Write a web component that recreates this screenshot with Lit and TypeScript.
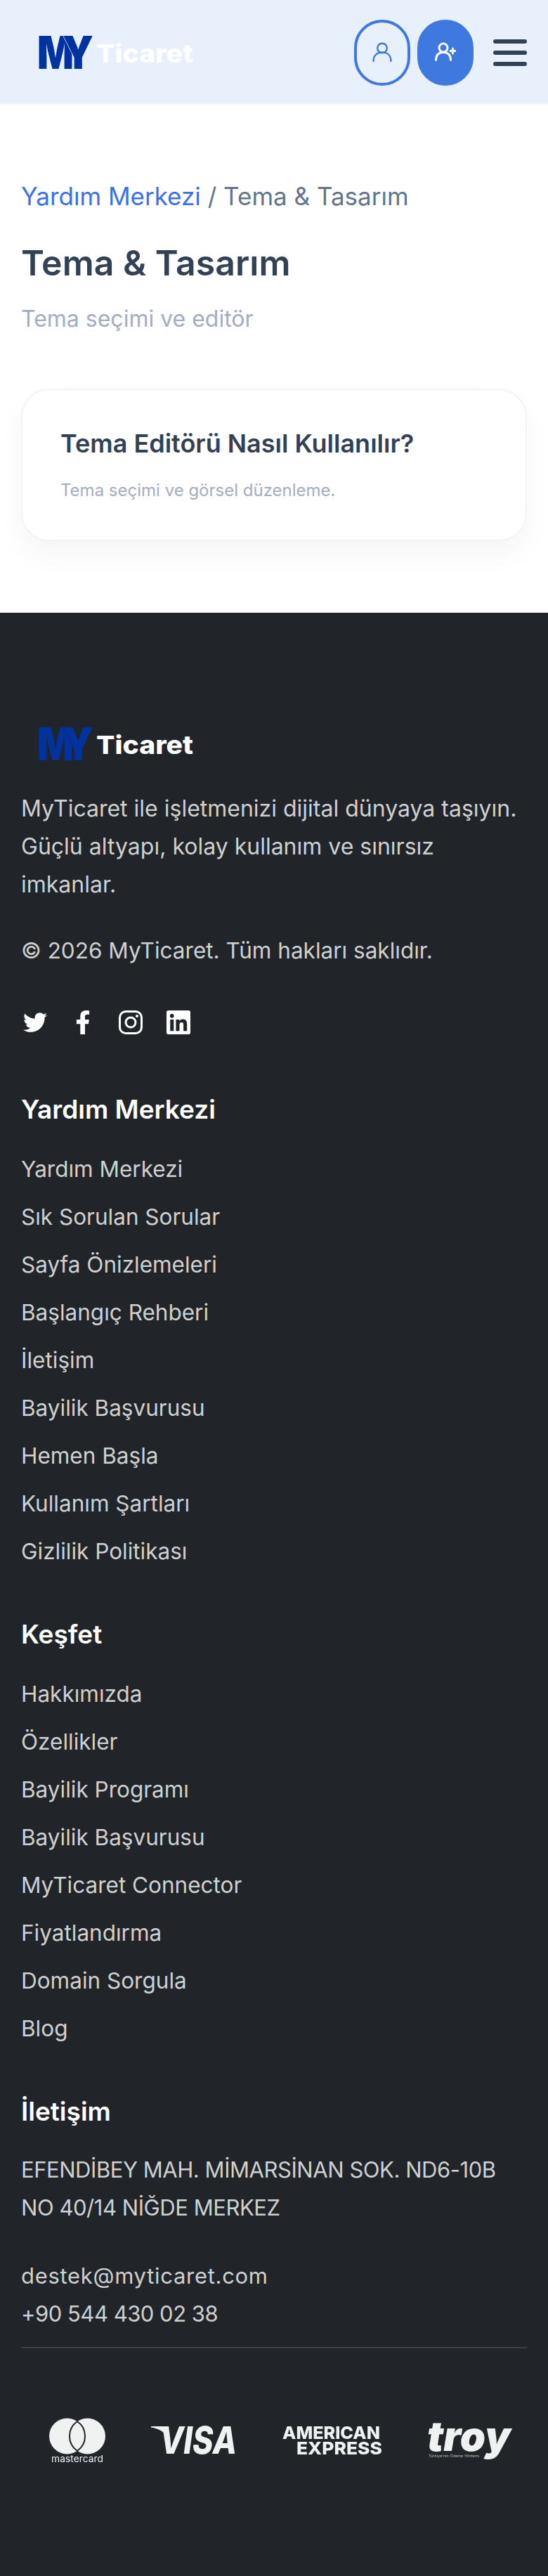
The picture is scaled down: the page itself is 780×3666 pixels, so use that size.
import { LitElement, html, css } from "lit";
import { customElement } from "lit/decorators.js";

const helpLinks = ["Yardım Merkezi","Sık Sorulan Sorular","Sayfa Önizlemeleri","Başlangıç Rehberi","İletişim","Bayilik Başvurusu","Hemen Başla","Kullanım Şartları","Gizlilik Politikası"];
const discoverLinks = ["Hakkımızda","Özellikler","Bayilik Programı","Bayilik Başvurusu","MyTicaret Connector","Fiyatlandırma","Domain Sorgula","Blog"];

const logo = (cls: string) => html`
  <svg class="logo ${cls}" width="224" height="50" viewBox="0 0 224 50">
    <text class="my" x="0" y="48" textLength="52" lengthAdjust="spacingAndGlyphs">M</text>
    <text class="my y" x="36" y="48" textLength="44" lengthAdjust="spacingAndGlyphs">Y</text>
    <text class="tic" x="84" y="39" textLength="138" lengthAdjust="spacingAndGlyphs">Ticaret</text>
  </svg>`;

@customElement("app-root")
export class AppRoot extends LitElement {
  static styles = css`
    :host { display: block; width: 780px; font-family: Inter, "Liberation Sans", sans-serif; background: #fff; }
    * { box-sizing: border-box; }
    .head { height: 148px; background: #e8f0fb; display: flex; align-items: center; padding: 2px 30px 0 53px; }
    .logo { display: block; overflow: visible; }
    .logo .my { font: 900 65px Inter, sans-serif; fill: #0033a0; }
    .logo .y { stroke-width: 1.5px; paint-order: stroke; }
    .logo.top .y { stroke: #e8f0fb; }
    .logo.bottom .y { stroke: #212529; }
    .logo .tic { font: 800 36px Inter, sans-serif; fill: #fff; }
    .actions { margin-left: auto; display: flex; align-items: center; }
    .btn { width: 80px; height: 94px; border-radius: 40px; border: 4px solid #3f79e0; display: flex; align-items: center; justify-content: center; }
    .btn.fill { background: #3f79e0; margin-left: 10px; }
    .burger { margin-left: 28px; display: flex; flex-direction: column; gap: 10px; }
    .burger i { display: block; width: 48px; height: 6px; border-radius: 3px; background: #334155; }
    main { padding: 107px 30px 102px; }
    .crumb { font-size: 35px; line-height: 48px; color: #64748b; }
    .crumb a { color: #3b71e6; }
    h1 { margin: 41px 0 0; font-size: 50px; line-height: 60px; font-weight: 600; color: #334155; }
    .sub { margin: 28px 0 0; font-size: 32px; line-height: 44px; color: #a3adbf; }
    .card { margin-top: 77px; height: 217px; border: 2px solid #f3f4f6; border-radius: 40px; padding: 51px 54px; box-shadow: 0 20px 40px rgba(0,0,0,.04); background: #fff; }
    .card h2 { margin: 0; font-size: 36px; line-height: 50px; font-weight: 600; color: #334155; }
    .card p { margin: 24px 0 0; font-size: 24px; line-height: 36px; color: #a3adbf; }
    footer { background: #212529; height: 2794px; padding: 162px 30px 0; color: #cfd0d1; font-size: 31.500px; line-height: 54px; }
    footer .logo { margin-left: 23px; }
    footer p { margin: 0; }
    .about { margin-top: 40px; font-size: 32px; }
    .copy { margin-top: 40px; }
    .social { margin-top: 58px; padding-left: 3px; display: flex; gap: 34px; }
    .social svg { display: block; width: 34px; height: 34px; fill: #fff; }
    h3 { margin: 0; color: #fff; font-size: 37px; line-height: 54px; font-weight: 600; }
    .sec1 { margin-top: 80px; }
    ul { list-style: none; margin: 31px 0 0; padding: 0; display: flex; flex-direction: column; gap: 14px; }
    .sec2, .sec3 { margin-top: 64px; }
    .addr { margin-top: 29px; font-size: 31px; letter-spacing: -.45px; }
    .contact { margin-top: 43px; font-size: 31px; }
    .mail { display: block; letter-spacing: .7px; }
    .tel { display: block; letter-spacing: -.5px; }
    hr { margin: 20px 0 0; border: 0; height: 2px; background: #3a4043; }
    .pay { margin-top: 100px; padding-left: 40px; display: flex; align-items: flex-start; filter: blur(.6px); }
    .pay svg { display: block; flex: none; overflow: visible; }
    .pay text { fill: #f0f1f1; font-family: Inter, sans-serif; }
    .pay .visa { margin: 10px 0 0 65px; }
    .pay .amex { margin: 11px 0 0 65px; }
    .pay .troy { margin: 5px 0 0 64px; }
  `;

  render() {
    return html`
      <header class="head">
        ${logo("top")}
        <div class="actions">
          <div class="btn">
            <svg width="30" height="30" viewBox="0 0 30 30" fill="none" stroke="#3f79e0" stroke-width="2.4" stroke-linecap="round"><circle cx="15" cy="8.500" r="6.800"/><path d="M2.500 27c0-8 5-12.500 12.500-12.500S27.500 19 27.500 27"/></svg>
          </div>
          <div class="btn fill">
            <svg width="30" height="30" viewBox="0 0 30 30" fill="none" stroke="#fff" stroke-width="3" stroke-linecap="round"><circle cx="12" cy="8" r="6"/><path d="M1.500 25.500c0-7 4-11 10.500-11s10.500 4 10.500 11"/><path d="M22 12.500h7M25.500 9v7"/></svg>
          </div>
          <div class="burger"><i></i><i></i><i></i></div>
        </div>
      </header>
      <main>
        <div class="crumb"><a>Yardım Merkezi</a> / Tema &amp; Tasarım</div>
        <h1>Tema &amp; Tasarım</h1>
        <p class="sub">Tema seçimi ve editör</p>
        <section class="card">
          <h2>Tema Editörü Nasıl Kullanılır?</h2>
          <p>Tema seçimi ve görsel düzenleme.</p>
        </section>
      </main>
      <footer>
        ${logo("bottom")}
        <p class="about">MyTicaret ile işletmenizi dijital dünyaya taşıyın. Güçlü altyapı, kolay kullanım ve sınırsız imkanlar.</p>
        <p class="copy">© 2026 MyTicaret. Tüm hakları saklıdır.</p>
        <div class="social">
          <svg viewBox="0 0 512 512"><path d="M459.37 151.716c.325 4.548.325 9.097.325 13.645 0 138.72-105.583 298.558-298.558 298.558-59.452 0-114.68-17.219-161.137-47.106 8.447.974 16.568 1.299 25.34 1.299 49.055 0 94.213-16.568 130.274-44.832-46.132-.975-84.792-31.188-98.112-72.772 6.498.974 12.995 1.624 19.818 1.624 9.421 0 18.843-1.3 27.614-3.573-48.081-9.747-84.143-51.98-84.143-102.985v-1.299c13.969 7.797 30.214 12.67 47.431 13.319-28.264-18.843-46.781-51.005-46.781-87.391 0-19.492 5.197-37.36 14.294-52.954 51.655 63.675 129.3 105.258 216.365 109.807-1.624-7.797-2.599-15.918-2.599-24.04 0-57.828 46.782-104.934 104.934-104.934 30.213 0 57.502 12.67 76.67 33.137 23.715-4.548 46.456-13.32 66.599-25.34-7.798 24.366-24.366 44.833-46.132 57.827 21.117-2.273 41.584-8.122 60.426-16.243-14.292 20.791-32.161 39.308-52.628 54.253z"/></svg>
          <svg viewBox="0 0 320 512"><path d="M279.14 288l14.22-92.66h-88.91v-60.13c0-25.35 12.42-50.06 52.24-50.06h40.42V6.26S260.43 0 225.36 0c-73.22 0-121.08 44.38-121.08 124.72v70.62H22.89V288h81.39v224h100.17V288z"/></svg>
          <svg viewBox="0 0 34 34"><rect x="1.500" y="1.500" width="31" height="31" rx="8.500" fill="none" stroke="#fff" stroke-width="3"/><circle cx="17" cy="17" r="7" fill="none" stroke="#fff" stroke-width="3"/><circle cx="26" cy="8" r="2"/></svg>
          <svg viewBox="0 0 448 448"><path transform="translate(0 -32)" d="M416 32H31.900C14.300 32 0 46.500 0 64.300v383.400C0 465.500 14.300 480 31.900 480H416c17.600 0 32-14.500 32-32.300V64.300c0-17.800-14.400-32.300-32-32.300zM135.400 416H69V202.200h66.500V416zm-33.200-243c-21.300 0-38.500-17.300-38.500-38.500S80.900 96 102.200 96c21.200 0 38.500 17.300 38.500 38.500 0 21.300-17.200 38.500-38.500 38.500zm282.100 243h-66.400V312c0-24.800-.5-56.700-34.500-56.700-34.600 0-39.900 27-39.900 54.900V416h-66.400V202.200h63.700v29.200h.9c8.900-16.800 30.600-34.500 62.900-34.500 67.200 0 79.700 44.300 79.700 101.900V416z"/></svg>
        </div>
        <section class="sec1">
          <h3>Yardım Merkezi</h3>
          <ul>${helpLinks.map((l) => html`<li>${l}</li>`)}</ul>
        </section>
        <section class="sec2">
          <h3>Keşfet</h3>
          <ul>${discoverLinks.map((l) => html`<li>${l}</li>`)}</ul>
        </section>
        <section class="sec3">
          <h3>İletişim</h3>
          <p class="addr">EFENDİBEY MAH. MİMARSİNAN SOK. ND6-10B<br>NO 40/14 NİĞDE MERKEZ</p>
          <p class="contact"><span class="mail">destek@myticaret.com</span><span class="tel">+90 544 430 02 38</span></p>
        </section>
        <hr>
        <div class="pay">
          <svg width="80" height="64" viewBox="0 0 80 64">
            <circle cx="25.500" cy="25" r="25.500" fill="#f0f1f1"/><circle cx="54.500" cy="25" r="25.500" fill="#f0f1f1"/>
            <path d="M40 4A25.500 25.500 0 0 0 40 46A25.500 25.500 0 0 0 40 4z" fill="#f0f1f1" stroke="#212529" stroke-width="2"/>
            <text x="3" y="62" font-size="13" textLength="74" lengthAdjust="spacingAndGlyphs">mastercard</text>
          </svg>
          <svg class="visa" width="122" height="42" viewBox="0 0 122 42">
            <path d="M0 1H20L27 20C21 10 11 4 0 2.500z" fill="#f0f1f1"/>
            <text x="12" y="40" font-size="54" font-weight="800" font-style="italic" textLength="110" lengthAdjust="spacingAndGlyphs">VISA</text>
          </svg>
          <svg class="amex" width="142" height="42" viewBox="0 0 142 42">
            <text x="0" y="18" font-size="25" font-weight="800" textLength="139" lengthAdjust="spacingAndGlyphs">AMERICAN</text>
            <text x="20" y="40" font-size="25" font-weight="800" textLength="122" lengthAdjust="spacingAndGlyphs">EXPRESS</text>
          </svg>
          <svg class="troy" width="119" height="56" viewBox="0 0 119 56">
            <text x="0" y="41" font-size="58" font-weight="900" font-style="italic" textLength="119" lengthAdjust="spacingAndGlyphs">troy</text>
            <text x="2" y="50" font-size="5" opacity=".7" textLength="72" lengthAdjust="spacingAndGlyphs">Türkiye'nin Ödeme Yöntemi</text>
          </svg>
        </div>
      </footer>
    `;
  }
}
